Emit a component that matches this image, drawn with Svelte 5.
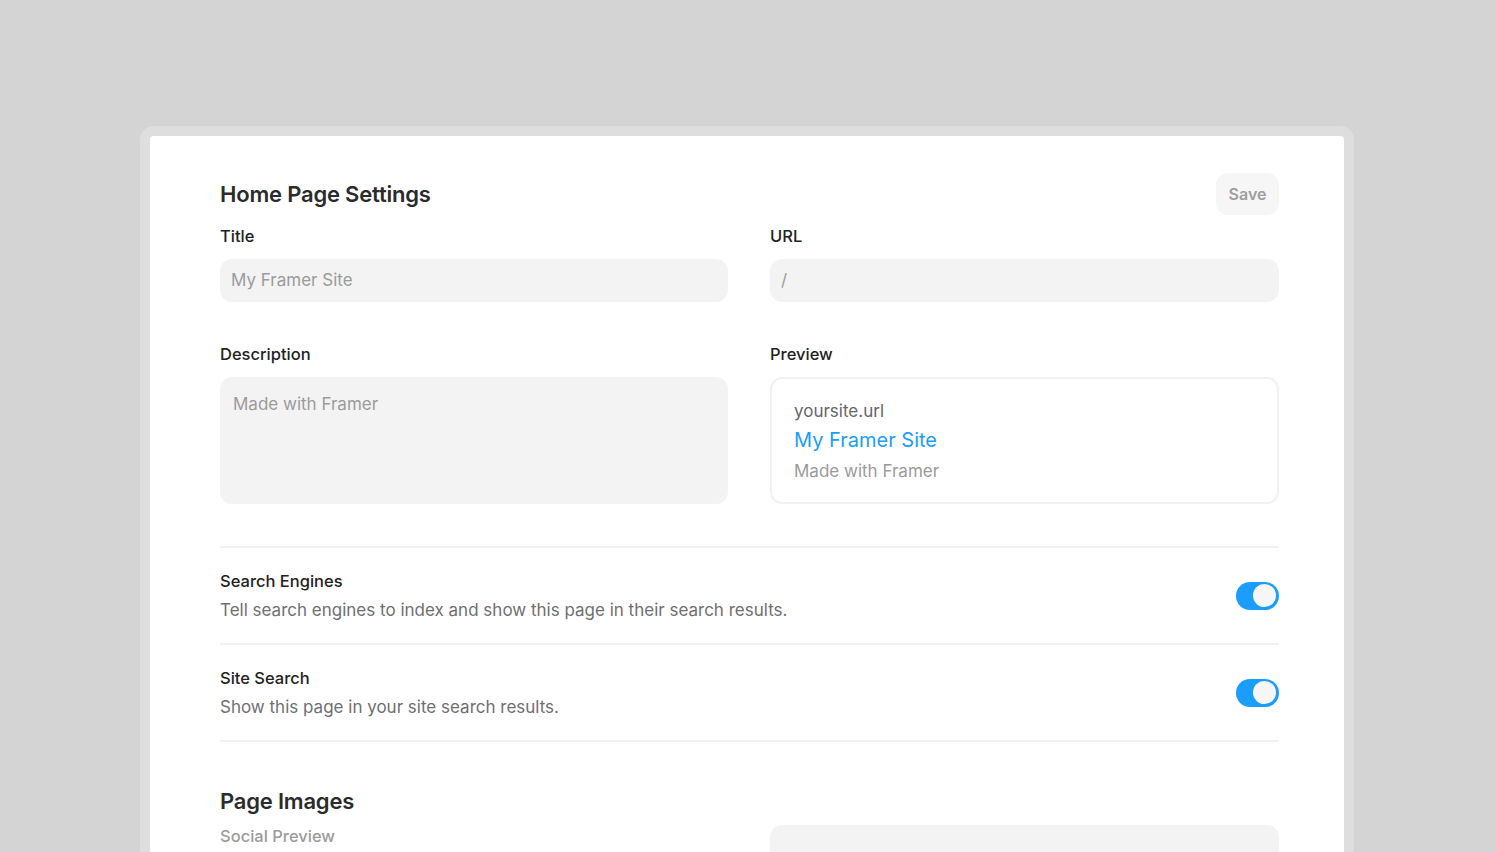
<script>
	const rows = [
		{ name: 'Search Engines', text: 'Tell search engines to index and show this page in their search results.' },
		{ name: 'Site Search', text: 'Show this page in your site search results.' }
	];
</script>

<div class="page">
	<div class="frame">
		<main class="panel">
			<header class="head">
				<h2>Home Page Settings</h2>
				<button type="button" class="save">Save</button>
			</header>

			<div class="fields">
				<div class="field">
					<span class="label">Title</span>
					<div class="input">My Framer Site</div>
				</div>
				<div class="field">
					<span class="label">URL</span>
					<div class="input">/</div>
				</div>
				<div class="field">
					<span class="label">Description</span>
					<div class="textarea">Made with Framer</div>
				</div>
				<div class="field">
					<span class="label">Preview</span>
					<div class="preview">
						<span class="site">yoursite.url</span>
						<span class="link">My Framer Site</span>
						<span class="desc">Made with Framer</span>
					</div>
				</div>
			</div>

			<section class="toggles">
				{#each rows as row}
					<div class="row">
						<div class="row-text">
							<span class="label">{row.name}</span>
							<p>{row.text}</p>
						</div>
						<span class="toggle"><span class="knob"></span></span>
					</div>
				{/each}
			</section>

			<h2 class="images">Page Images</h2>
			<div class="fields">
				<div class="field">
					<span class="label muted">Social Preview</span>
				</div>
				<div class="social-box"></div>
			</div>
		</main>
	</div>
</div>

<style>
	:global(body) {
		margin: 0;
		background: #d4d4d4;
		overflow: hidden;
	}

	.page {
		height: 852px;
		overflow: hidden;
		padding: 126px 142px 0 140px;
		box-sizing: border-box;
		font-family: Inter, 'Liberation Sans', sans-serif;
	}

	.frame {
		padding: 10px 10px 0;
		background: #dedede;
		border-radius: 14px 14px 0 0;
	}

	.panel {
		padding: 37px 65px 0 70px;
		height: 900px;
		background: #fff;
		border-radius: 4px 4px 0 0;
	}

	.head {
		display: flex;
		align-items: center;
		justify-content: space-between;
		height: 42px;
	}

	h2 {
		margin: 0;
		font-size: 22px;
		font-weight: 600;
		letter-spacing: -0.2px;
		color: #2b2b2b;
	}

	.save {
		width: 63px;
		height: 42px;
		padding: 0;
		border: 0;
		border-radius: 12px;
		background: #f6f6f6;
		color: #9e9e9e;
		font: 600 16px Inter, 'Liberation Sans', sans-serif;
	}

	.fields {
		display: grid;
		grid-template-columns: 508px 509px;
		column-gap: 42px;
		row-gap: 41px;
		margin-top: 10px;
	}

	.field {
		display: flex;
		flex-direction: column;
		gap: 12px;
	}

	.label {
		font-size: 16.5px;
		line-height: 22px;
		font-weight: 450;
		color: #222;
	}

	.input,
	.textarea {
		box-sizing: border-box;
		background: #f3f3f3;
		color: #9b9b9b;
		font-size: 17px;
		border-radius: 12px;
	}

	.input {
		height: 43px;
		padding: 0 11px;
		line-height: 43px;
	}

	.textarea {
		height: 127px;
		padding: 16px 13px;
		line-height: 22px;
	}

	.preview {
		display: flex;
		flex-direction: column;
		box-sizing: border-box;
		height: 127px;
		padding: 20px 22px;
		border: 2px solid #f1f1f1;
		border-radius: 12px;
	}

	.site {
		font-size: 17px;
		line-height: 24px;
		color: #666;
	}

	.link {
		margin-top: 3px;
		font-size: 20px;
		line-height: 28px;
		color: #1a9dfb;
	}

	.desc {
		margin-top: 5px;
		font-size: 17px;
		line-height: 24px;
		color: #9b9b9b;
	}

	.toggles {
		margin-top: 42px;
		border-top: 2px solid #f1f1f1;
	}

	.row {
		display: flex;
		align-items: center;
		justify-content: space-between;
		height: 95px;
		border-bottom: 2px solid #f1f1f1;
	}

	.row-text {
		display: flex;
		flex-direction: column;
		gap: 7px;
	}

	.row-text p {
		margin: 0;
		font-size: 17px;
		line-height: 22px;
		color: #6f6f6f;
	}

	.toggle {
		display: flex;
		justify-content: flex-end;
		align-items: center;
		box-sizing: border-box;
		width: 43px;
		height: 28px;
		padding-right: 3px;
		border-radius: 14px;
		background: #1a9dfb;
	}

	.knob {
		width: 23px;
		height: 23px;
		border-radius: 50%;
		background: #f6f6f6;
	}

	.images {
		margin-top: 45px;
		line-height: 28px;
	}

	.muted {
		color: #9b9b9b;
	}

	.social-box {
		height: 40px;
		background: #f3f3f3;
		border-radius: 12px;
	}
</style>
